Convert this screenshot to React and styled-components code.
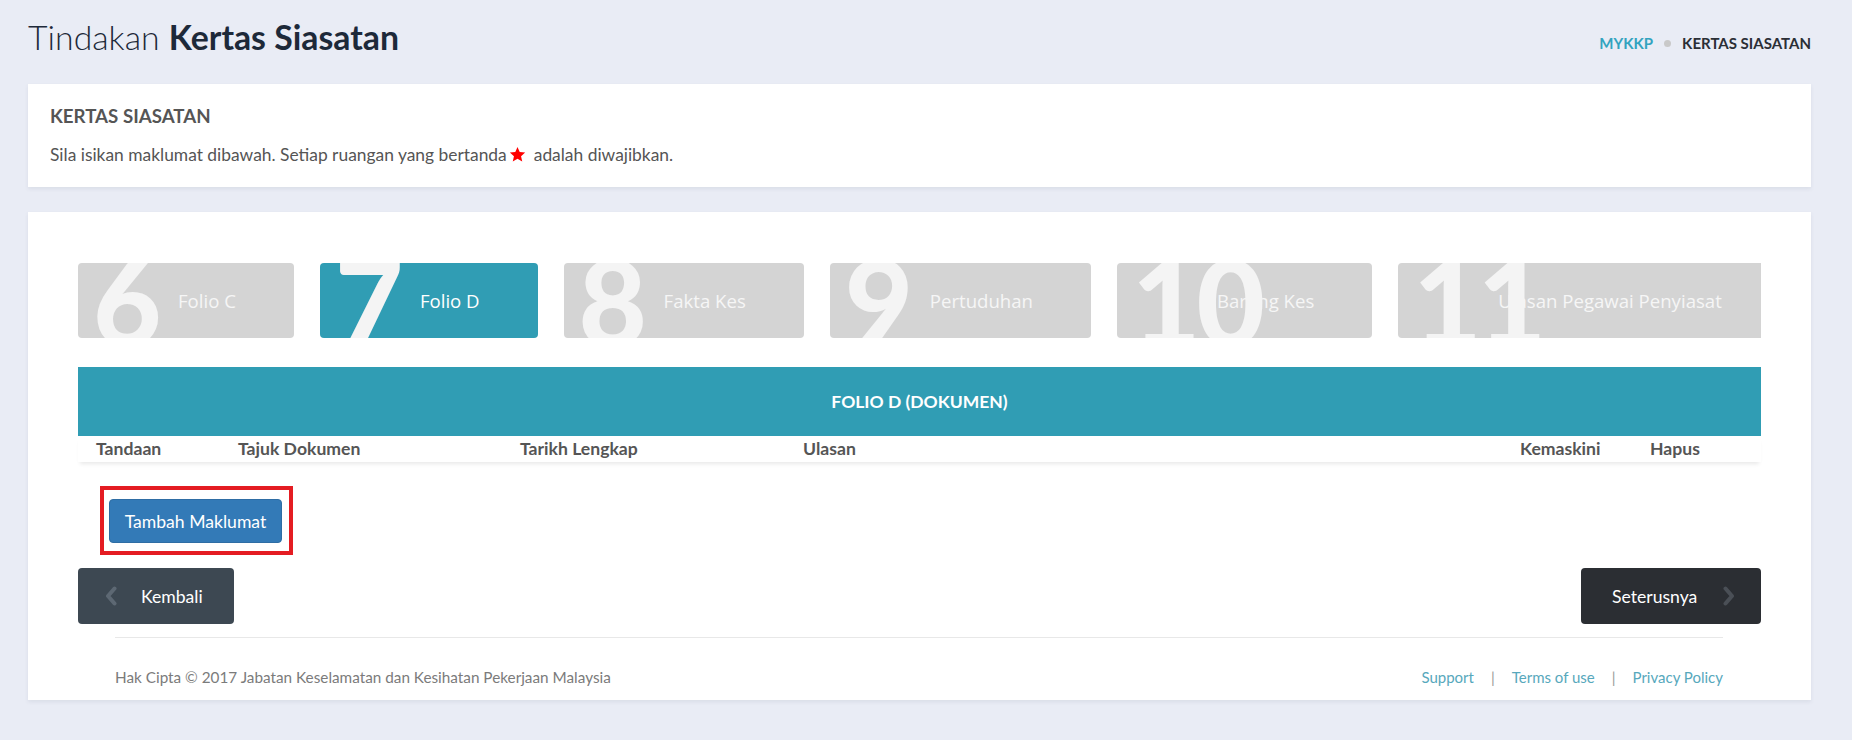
import React from 'react';
import styled, { createGlobalStyle } from 'styled-components';

const Global = createGlobalStyle`
  html, body { margin: 0; padding: 0; background: #e9ecf5; }
  body { font-family: Lato, "Open Sans", sans-serif; color: #555; }
  * { box-sizing: border-box; }
`;

const Page = styled.div`
  padding: 16px 41px 40px 28px;
`;

const Header = styled.header`
  display: flex;
  justify-content: space-between;
  align-items: flex-start;
  height: 68px;
`;

const Title = styled.h1`
  margin: 0;
  font-size: 33.8px;
  line-height: 43px;
  font-weight: 300;
  color: #1d2939;
  b { font-weight: 700; }
`;

const Breadcrumb = styled.nav`
  display: flex;
  align-items: center;
  margin-top: 18px;
  font-size: 15px;
  line-height: 19px;
  font-weight: 700;
`;

const Crumb = styled.span`
  color: ${p => (p.$link ? '#32a3bf' : '#2b2f36')};
`;

const Dot = styled.span`
  width: 7px;
  height: 7px;
  border-radius: 50%;
  background: #c9c9c9;
  margin: 0 11px;
`;

const Panel = styled.section`
  background: #fff;
  box-shadow: 0 2px 4px rgba(40, 50, 80, 0.08);
`;

const InfoPanel = styled(Panel)`
  padding: 21px 22px 20px 22px;
`;

const InfoTitle = styled.h2`
  margin: 0;
  font-size: 18.7px;
  line-height: 22px;
  font-weight: 700;
  color: #555;
`;

const InfoText = styled.p`
  margin: 16px 0 0;
  font-size: 17.4px;
  line-height: 24px;
  color: #555;
  display: flex;
  align-items: center;
`;

const Star = styled.svg`
  width: 17px;
  height: 17px;
  margin: 0 8px 0 2px;
  position: relative;
  top: -1px;
`;

const MainPanel = styled(Panel)`
  margin-top: 25px;
  padding: 51px 50px 0;
`;

const Steps = styled.div`
  display: flex;
  gap: 26px;
  height: 75px;
  overflow: hidden;
`;

const Step = styled.div`
  position: relative;
  flex: none;
  height: 75px;
  display: flex;
  align-items: center;
  padding: 0 58px 0 100px;
  border-radius: 4px;
  overflow: hidden;
  background: ${p => (p.$active ? '#309db4' : '#d4d4d4')};
  color: ${p => (p.$active ? '#fff' : '#f6f6f6')};
  font-family: "Open Sans", sans-serif;
  font-size: 18.6px;
  white-space: nowrap;
`;

const StepNum = styled.span`
  position: absolute;
  left: 15px;
  top: -21px;
  font-family: Lato, sans-serif;
  font-weight: 900;
  font-size: 118px;
  line-height: 1;
  color: #f4f4f4;
  letter-spacing: -4px;
`;

const TableHead = styled.div`
  margin-top: 29px;
  height: 69px;
  background: #309db4;
  color: #fff;
  font-size: 17.5px;
  font-weight: 700;
  display: flex;
  align-items: center;
  justify-content: center;
`;

const ColumnRow = styled.div`
  display: grid;
  grid-template-columns: 142px 282px 283px 717px 130px 1fr;
  height: 26px;
  line-height: 26px;
  padding-left: 18px;
  font-size: 17.6px;
  font-weight: 700;
  color: #555;
  box-shadow: 0 4px 4px -2px rgba(0, 0, 0, 0.09);
`;

const AddWrap = styled.div`
  margin: 24px 0 0 22px;
  width: fit-content;
  border: 4px solid #e41c22;
  padding: 9px 7px 8px 5px;
`;

const AddButton = styled.button`
  width: 173px;
  height: 44px;
  background: #337ab7;
  border: 1px solid #2e6da4;
  border-radius: 4px;
  color: #fff;
  font-family: Lato, sans-serif;
  font-size: 17.6px;
  padding: 0;
`;

const NavRow = styled.div`
  margin-top: 13px;
  display: flex;
  justify-content: space-between;
`;

const NavButton = styled.button`
  width: ${p => p.$w}px;
  height: 56px;
  border: none;
  border-radius: 4px;
  background: ${p => p.$bg};
  color: #fff;
  font-family: Lato, sans-serif;
  font-size: 17.6px;
  display: flex;
  align-items: center;
  gap: ${p => p.$gap}px;
  padding: 0 0 0 ${p => p.$pl}px;
`;

const Chevron = styled.svg`
  width: 12px;
  height: 20px;
  flex: none;
`;

const Footer = styled.footer`
  margin: 13px 38px 0 37px;
  border-top: 1px solid #e8e8e8;
  padding: 29px 0 13px;
  display: flex;
  justify-content: space-between;
  font-size: 15.3px;
  line-height: 20px;
  color: #7b7b7b;
`;

const Links = styled.div`
  display: flex;
  gap: 17px;
  font-size: 15px;
`;

const FootLink = styled.a`
  color: #57a8bc;
  text-decoration: none;
`;

const Sep = styled.span`
  color: #999;
`;

const steps = [
  { n: 6, label: 'Folio C' },
  { n: 7, label: 'Folio D', active: true },
  { n: 8, label: 'Fakta Kes' },
  { n: 9, label: 'Pertuduhan' },
  { n: 10, label: 'Barang Kes' },
  { n: 11, label: 'Ulasan Pegawai Penyiasat' },
];

const columns = ['Tandaan', 'Tajuk Dokumen', 'Tarikh Lengkap', 'Ulasan', 'Kemaskini', 'Hapus'];

export default function App() {
  return (
    <>
      <Global />
      <Page>
        <Header>
          <Title>Tindakan <b>Kertas Siasatan</b></Title>
          <Breadcrumb>
            <Crumb $link>MYKKP</Crumb>
            <Dot />
            <Crumb>KERTAS SIASATAN</Crumb>
          </Breadcrumb>
        </Header>

        <InfoPanel>
          <InfoTitle>KERTAS SIASATAN</InfoTitle>
          <InfoText>
            Sila isikan maklumat dibawah. Setiap ruangan yang bertanda
            <Star viewBox="0 0 24 24">
              <path fill="#f00" d="M12 1.5l3.1 7.1 7.7.7-5.8 5.1 1.7 7.6L12 18l-6.7 4 1.7-7.6-5.8-5.1 7.7-.7z" />
            </Star>
            adalah diwajibkan.
          </InfoText>
        </InfoPanel>

        <MainPanel>
          <Steps>
            {steps.map(s => (
              <Step key={s.n} $active={s.active}>
                {s.label}
                <StepNum>{s.n}</StepNum>
              </Step>
            ))}
          </Steps>

          <TableHead>FOLIO D (DOKUMEN)</TableHead>
          <ColumnRow>
            {columns.map(c => (
              <span key={c}>{c}</span>
            ))}
          </ColumnRow>

          <AddWrap>
            <AddButton>Tambah Maklumat</AddButton>
          </AddWrap>

          <NavRow>
            <NavButton $w={156} $bg="#3d4852" $pl={27} $gap={24}>
              <Chevron viewBox="0 0 12 20">
                <path d="M9.5 2.5L3 10l6.5 7.5" fill="none" stroke="#5d6873" strokeWidth="4" strokeLinecap="round" strokeLinejoin="round" />
              </Chevron>
              Kembali
            </NavButton>
            <NavButton $w={180} $bg="#2b2e33" $pl={31} $gap={26}>
              Seterusnya
              <Chevron viewBox="0 0 12 20">
                <path d="M2.5 2.5L9 10l-6.5 7.5" fill="none" stroke="#4a4f56" strokeWidth="4" strokeLinecap="round" strokeLinejoin="round" />
              </Chevron>
            </NavButton>
          </NavRow>

          <Footer>
            <span>Hak Cipta © 2017 Jabatan Keselamatan dan Kesihatan Pekerjaan Malaysia</span>
            <Links>
              <FootLink href="#">Support</FootLink>
              <Sep>|</Sep>
              <FootLink href="#">Terms of use</FootLink>
              <Sep>|</Sep>
              <FootLink href="#">Privacy Policy</FootLink>
            </Links>
          </Footer>
        </MainPanel>
      </Page>
    </>
  );
}
